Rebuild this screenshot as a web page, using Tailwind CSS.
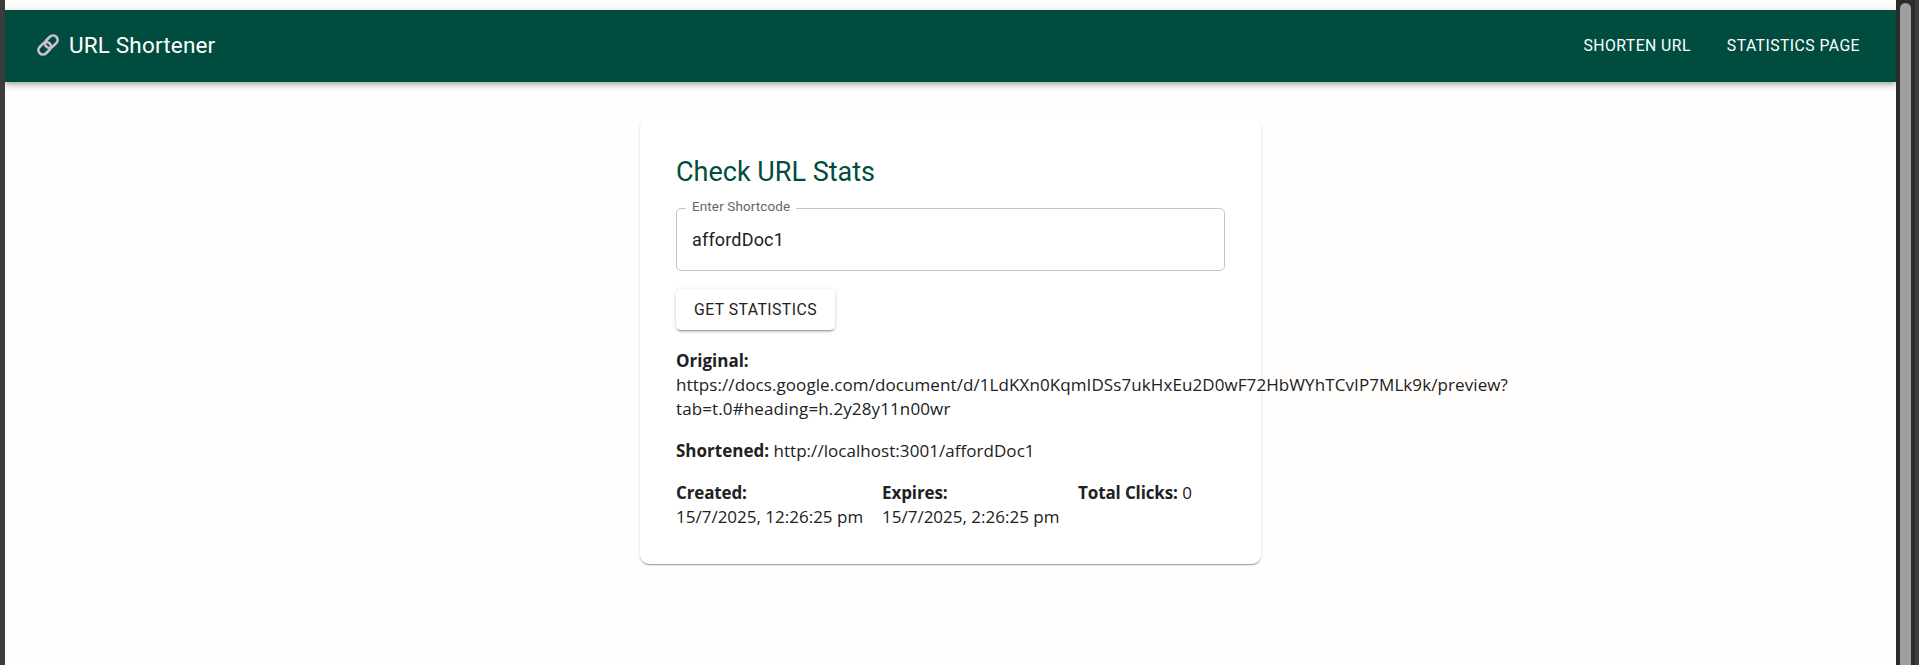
<!DOCTYPE html>
<html lang="en">
<head>
<meta charset="utf-8">
<title>URL Shortener</title>
<script src="https://cdn.jsdelivr.net/npm/@tailwindcss/browser@4"></script>
</head>
<body class="flex h-[665px] w-[1919px] overflow-hidden bg-[#fffefc] font-['Roboto',sans-serif] text-[#212121]">
<div class="w-[5px] shrink-0 bg-[#3c3c3c]"></div>
<div class="h-full w-[1891px] overflow-hidden pt-[10px]">
  <header class="flex h-[72px] items-center justify-between bg-[#004d40] pr-9 pl-[31px] text-white shadow-[0_2px_4px_-1px_rgba(0,0,0,0.2),0_4px_6px_0_rgba(0,0,0,0.14),0_1px_11px_0_rgba(0,0,0,0.12)]">
    <div class="flex items-center gap-[9px] pb-[2px]">
      <svg class="size-6" viewBox="0 0 24 24" fill="none" stroke="#cdc0d4" stroke-width="2.6">
        <rect x="-7" y="-4.5" width="14" height="9" rx="4.5" transform="translate(15.3 8.7) rotate(-45)"/>
        <rect x="-7" y="-4.5" width="14" height="9" rx="4.5" transform="translate(8.7 15.3) rotate(-45)"/>
      </svg>
      <h1 class="text-[22.5px] leading-9 font-normal tracking-[0.17px]">URL Shortener</h1>
    </div>
    <nav class="flex gap-9 text-[15.75px] tracking-[0.45px]"><a>SHORTEN URL</a><a>STATISTICS PAGE</a></nav>
  </header>
  <main class="mx-auto mt-9 h-[446px] w-[621px] rounded-[9px] bg-white p-9 shadow-[0_2px_1px_-1px_rgba(0,0,0,0.2),0_1px_1px_0_rgba(0,0,0,0.14),0_1px_3px_0_rgba(0,0,0,0.12)]">
    <h2 class="text-[27px] leading-9 text-[#004d40]">Check URL Stats</h2>
    <fieldset class="relative mt-[18px] h-[63px] w-[549px] rounded-[5px] border border-[#c4c4c4] px-[15px]">
      <span class="absolute -top-[13px] left-[9px] bg-white px-[6px] text-[13.5px] leading-5 tracking-[0.11px] text-[#666]">Enter Shortcode</span>
      <div class="pt-[17px] text-[18px] leading-7 tracking-[0.17px]">affordDoc1</div>
    </fieldset>
    <button class="mt-[18px] block h-[41px] w-[159px] rounded-[5px] bg-white text-[15.75px] tracking-[0.45px] shadow-[0_3px_1px_-2px_rgba(0,0,0,0.2),0_2px_2px_0_rgba(0,0,0,0.14),0_1px_5px_0_rgba(0,0,0,0.12)]">GET STATISTICS</button>
    <div class="mt-[19px] font-['Open_Sans',sans-serif] text-[17px] leading-6 whitespace-nowrap">
      <p><strong>Original:</strong><br><span class="tracking-[0.088px]">https://docs.google.com/document/d/1LdKXn0KqmIDSs7ukHxEu2D0wF72HbWYhTCvIP7MLk9k/preview?</span><br><span class="tracking-[0.12px]">tab=t.0#heading=h.2y28y11n00wr</span></p>
      <p class="mt-[18px]"><strong>Shortened:</strong> <span class="tracking-[0.05px]">http://localhost:3001/affordDoc1</span></p>
      <div class="mt-[18px] flex gap-[18px]">
        <p class="w-[188px]"><strong class="tracking-[-0.15px]">Created:</strong><br><span>15/7/2025, 12:26:25 pm</span></p>
        <p class="w-[178px]"><strong class="tracking-[-0.1px]">Expires:</strong><br><span>15/7/2025, 2:26:25 pm</span></p>
        <p><strong class="tracking-[-0.12px]">Total Clicks:</strong> <span>0</span></p>
      </div>
    </div>
  </main>
</div>
<div class="flex w-[23px] shrink-0 bg-[#2c2c2c]"><div class="mt-[3px] ml-1 h-[662px] w-[11px] rounded-t-full bg-[#9f9f9f]"></div><div class="ml-1 h-full w-1 bg-[#3c3c3c]"></div></div>
</body>
</html>
